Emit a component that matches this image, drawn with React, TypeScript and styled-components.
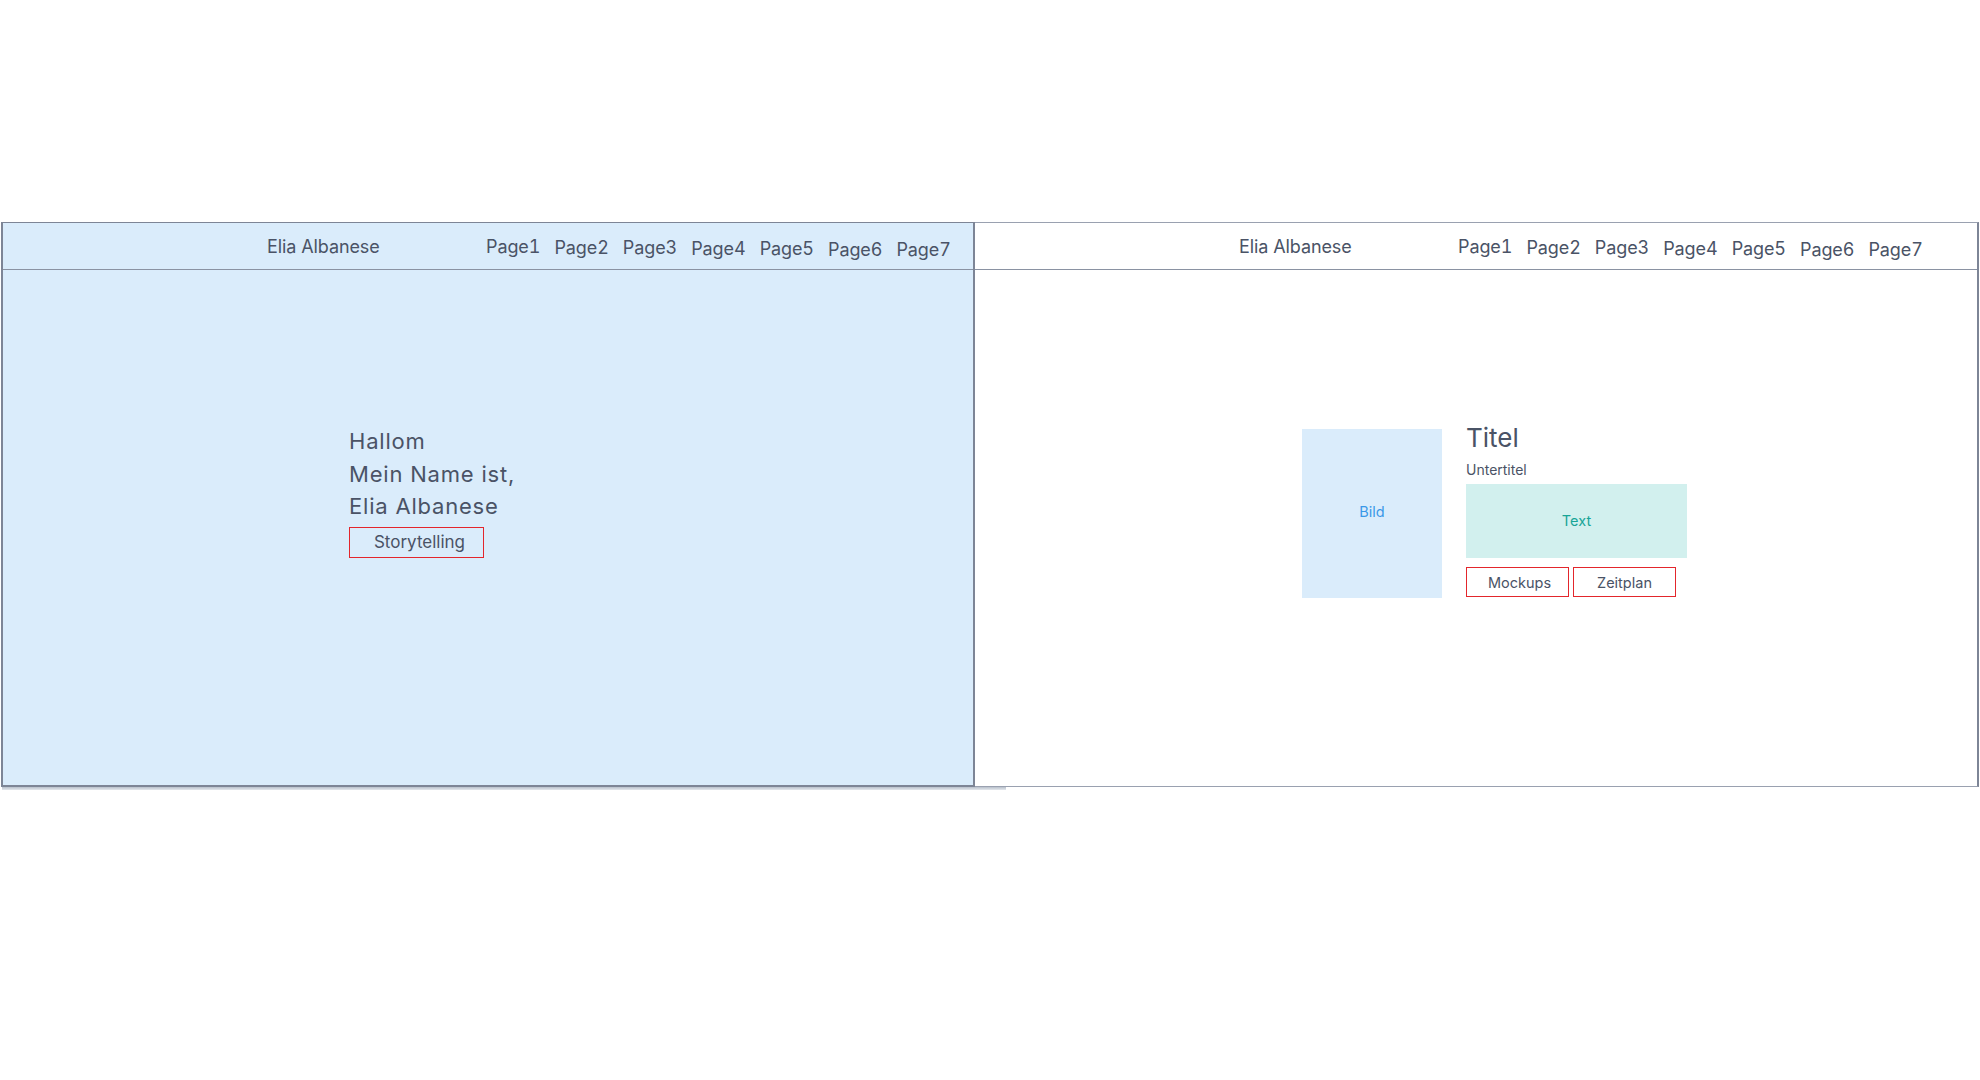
import React from "react";
import styled, { createGlobalStyle } from "styled-components";

const GlobalStyle = createGlobalStyle`
  html, body {
    margin: 0;
    padding: 0;
    background: #ffffff;
  }
  body {
    font-family: Inter, "Noto Sans", "Liberation Sans", sans-serif;
    color: #4a5366;
  }
  * { box-sizing: border-box; }
`;

const Stage = styled.div`
  width: 1980px;
  height: 1080px;
  padding: 222px 0 0 1px;
`;

const Row = styled.div`
  display: flex;
  align-items: stretch;
`;

const Panel = styled.section<{ $width: number; $tinted?: boolean }>`
  width: ${(p) => p.$width}px;
  height: 565px;
  display: flex;
  flex-direction: column;
  background: ${(p) => (p.$tinted ? "#daecfb" : "#ffffff")};
  border-top: 1.5px solid ${(p) => (p.$tinted ? "#7d8596" : "#9aa1b0")};
  border-bottom: ${(p) => (p.$tinted ? "2px solid #7d8596" : "1px solid #9aa1b0")};
  border-left: ${(p) => (p.$tinted ? "2px solid #7d8596" : "none")};
  border-right: 2px solid #7d8596;
`;

const Header = styled.header`
  height: 47px;
  flex: none;
  display: grid;
  grid-template-columns: 219px auto;
  align-items: center;
  padding-left: 264px;
  border-bottom: 1.5px solid #8a92a2;
`;

const Brand = styled.div`
  font-size: 18px;
  color: #4a5366;
  letter-spacing: -0.1px;
  padding-top: 1px;
`;

const Nav = styled.nav`
  display: flex;
  gap: 14.1px;
`;

const NavItem = styled.span<{ $drop: number }>`
  font-size: 18px;
  color: #4a5366;
  letter-spacing: -0.1px;
  font-variant-numeric: tabular-nums;
  transform: translateY(${(p) => p.$drop}px);
`;

const Body = styled.div<{ $padLeft: number; $padTop: number }>`
  flex: 1;
  padding: ${(p) => p.$padTop}px 0 0 ${(p) => p.$padLeft}px;
`;

const Greeting = styled.div`
  font-size: 22px;
  line-height: 32.5px;
  letter-spacing: 0.8px;
  color: #4a5366;
`;

const OutlineButton = styled.button<{ $width: number; $height: number; $size: number }>`
  display: flex;
  align-items: center;
  justify-content: center;
  width: ${(p) => p.$width}px;
  height: ${(p) => p.$height}px;
  padding: 0;
  background: transparent;
  border: 1.5px solid #e3262c;
  font-family: Inter, "Noto Sans", "Liberation Sans", sans-serif;
  font-size: ${(p) => p.$size}px;
  color: #4a5366;
  cursor: pointer;
`;

const StoryButton = styled(OutlineButton)`
  margin-top: 4px;
  padding-left: 6px;
`;

const Card = styled.div`
  display: flex;
  align-items: flex-start;
  gap: 24px;
`;

const ImageBox = styled.div`
  width: 140px;
  height: 169px;
  margin-top: 6px;
  background: #daecfb;
  display: flex;
  align-items: center;
  justify-content: center;
  font-size: 14.5px;
  color: #3a98e8;
  padding-bottom: 4px;
`;

const Column = styled.div`
  width: 221px;
  display: flex;
  flex-direction: column;
`;

const Title = styled.h1`
  margin: 0;
  font-size: 26px;
  font-weight: 400;
  line-height: 30px;
  color: #4a5366;
`;

const Subtitle = styled.div`
  margin-top: 8px;
  font-size: 14px;
  line-height: 18px;
  color: #4a5366;
`;

const TextBox = styled.div`
  margin-top: 5px;
  height: 74px;
  background: #d2f0ee;
  display: flex;
  align-items: center;
  justify-content: center;
  font-size: 14.5px;
  color: #18a597;
  padding-bottom: 1px;
`;

const ButtonRow = styled.div`
  margin-top: 9px;
  display: flex;
  gap: 4px;
`;

const FirstAction = styled(OutlineButton)`
  padding-left: 4px;
`;

const Shadow = styled.div`
  width: 1004px;
  height: 3px;
  margin-left: 1px;
  background: linear-gradient(#b8c0cb, #e4e8ed);
`;

const pages = ["Page1", "Page2", "Page3", "Page4", "Page5", "Page6", "Page7"];

function SiteHeader() {
  return (
    <Header>
      <Brand>Elia Albanese</Brand>
      <Nav>
        {pages.map((p, i) => (
          <NavItem key={p} $drop={i * 0.55}>
            {p}
          </NavItem>
        ))}
      </Nav>
    </Header>
  );
}

export default function App() {
  return (
    <>
      <GlobalStyle />
      <Stage>
        <Row>
          <Panel $width={974} $tinted>
            <SiteHeader />
            <Body $padLeft={346} $padTop={155}>
              <Greeting>
                Hallom
                <br />
                Mein Name ist,
                <br />
                Elia Albanese
              </Greeting>
              <StoryButton $width={135} $height={31} $size={17}>
                Storytelling
              </StoryButton>
            </Body>
          </Panel>
          <Panel $width={1004}>
            <SiteHeader />
            <Body $padLeft={327} $padTop={153}>
              <Card>
                <ImageBox>Bild</ImageBox>
                <Column>
                  <Title>Titel</Title>
                  <Subtitle>Untertitel</Subtitle>
                  <TextBox>Text</TextBox>
                  <ButtonRow>
                    <FirstAction $width={103} $height={30} $size={14.5}>
                      Mockups
                    </FirstAction>
                    <OutlineButton $width={103} $height={30} $size={14.5}>
                      Zeitplan
                    </OutlineButton>
                  </ButtonRow>
                </Column>
              </Card>
            </Body>
          </Panel>
        </Row>
        <Shadow />
      </Stage>
    </>
  );
}
